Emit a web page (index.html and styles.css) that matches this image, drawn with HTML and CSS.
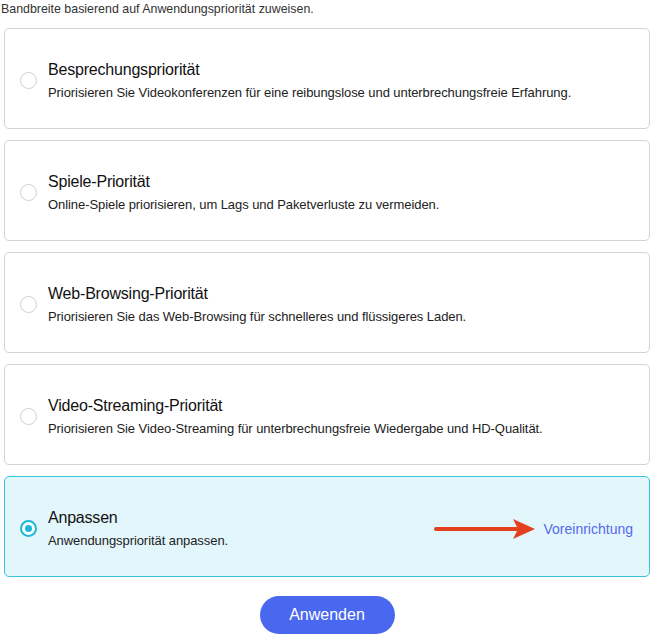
FILE: index.html
```html
<!DOCTYPE html>
<html lang="de">
<head>
  <meta charset="UTF-8" />
  <meta name="viewport" content="width=device-width, initial-scale=1.0"/>
  <title>Anwendungspriorität</title>
  <link rel="stylesheet" href="styles.css">
</head>
<body>
  <p class="intro">Bandbreite basierend auf Anwendungspriorität zuweisen.</p>

  <div class="options">
    <label class="option">
      <span class="radio"></span>
      <span class="text">
        <span class="title">Besprechungspriorität</span>
        <span class="desc">Priorisieren Sie Videokonferenzen für eine reibungslose und unterbrechungsfreie Erfahrung.</span>
      </span>
    </label>

    <label class="option">
      <span class="radio"></span>
      <span class="text">
        <span class="title">Spiele-Priorität</span>
        <span class="desc">Online-Spiele priorisieren, um Lags und Paketverluste zu vermeiden.</span>
      </span>
    </label>

    <label class="option">
      <span class="radio"></span>
      <span class="text">
        <span class="title">Web-Browsing-Priorität</span>
        <span class="desc">Priorisieren Sie das Web-Browsing für schnelleres und flüssigeres Laden.</span>
      </span>
    </label>

    <label class="option">
      <span class="radio"></span>
      <span class="text">
        <span class="title">Video-Streaming-Priorität</span>
        <span class="desc">Priorisieren Sie Video-Streaming für unterbrechungsfreie Wiedergabe und HD-Qualität.</span>
      </span>
    </label>

    <label class="option selected">
      <span class="radio"></span>
      <span class="text">
        <span class="title">Anpassen</span>
        <span class="desc">Anwendungspriorität anpassen.</span>
      </span>
      <span class="preset">
        <svg class="arrow" width="104" height="26" viewBox="0 0 104 26">
          <line x1="3" y1="13" x2="84" y2="13" stroke="#e2401f" stroke-width="4" stroke-linecap="round"/>
          <path d="M80 3 L102 13 L80 23 L85 13 Z" fill="#e2401f"/>
        </svg>
        <a href="#" class="preset-link">Voreinrichtung</a>
      </span>
    </label>
  </div>

  <div class="actions">
    <button class="apply">Anwenden</button>
  </div>
</body>
</html>
```

FILE: styles.css
```css
body {
  margin: 0;
  padding: 0 3px 0 4px;
  background: #fff;
  font-family: "Liberation Sans", Arial, sans-serif;
  color: #222;
}
.intro {
  margin: 0;
  height: 28px;
  padding-top: 2px;
  box-sizing: border-box;
  font-size: 12.4px;
  color: #333;
  margin-left: -3px;
}
.options {
  display: flex;
  flex-direction: column;
  gap: 11px;
}
.option {
  display: flex;
  align-items: center;
  height: 101px;
  box-sizing: border-box;
  border: 1px solid #d4d4d6;
  border-radius: 5px;
  padding: 4px 16px 0 15px;
  background: #fff;
  cursor: pointer;
}
.radio {
  width: 17px;
  height: 17px;
  box-sizing: border-box;
  border: 1px solid #cfcfd2;
  border-radius: 50%;
  background: #fff;
  margin-right: 11px;
  flex-shrink: 0;
  position: relative;
}
.text {
  display: flex;
  flex-direction: column;
  flex: 1;
}
.title {
  font-size: 16px;
  letter-spacing: -0.2px;
  color: #111;
  line-height: 20px;
  margin-bottom: 5px;
}
.desc {
  font-size: 13px;
  letter-spacing: -0.07px;
  color: #222;
  line-height: 16px;
}
.option.selected {
  background: #e3f6fb;
  border-color: #39c4de;
}
.option.selected .radio {
  border: 2px solid #1bb8d8;
}
.option.selected .radio::after {
  content: "";
  position: absolute;
  left: 3px;
  top: 3px;
  width: 7px;
  height: 7px;
  border-radius: 50%;
  background: #1bb8d8;
}
.preset {
  display: flex;
  align-items: center;
  gap: 6px;
}
.preset-link {
  color: #5668ee;
  font-size: 14px;
  text-decoration: none;
}
.actions {
  display: flex;
  justify-content: center;
  padding-top: 19px;
}
.apply {
  width: 135px;
  height: 38px;
  border: none;
  border-radius: 19px;
  background: #4a68ef;
  color: #fff;
  font-family: "Liberation Sans", Arial, sans-serif;
  font-size: 16px;
  cursor: pointer;
}
```
